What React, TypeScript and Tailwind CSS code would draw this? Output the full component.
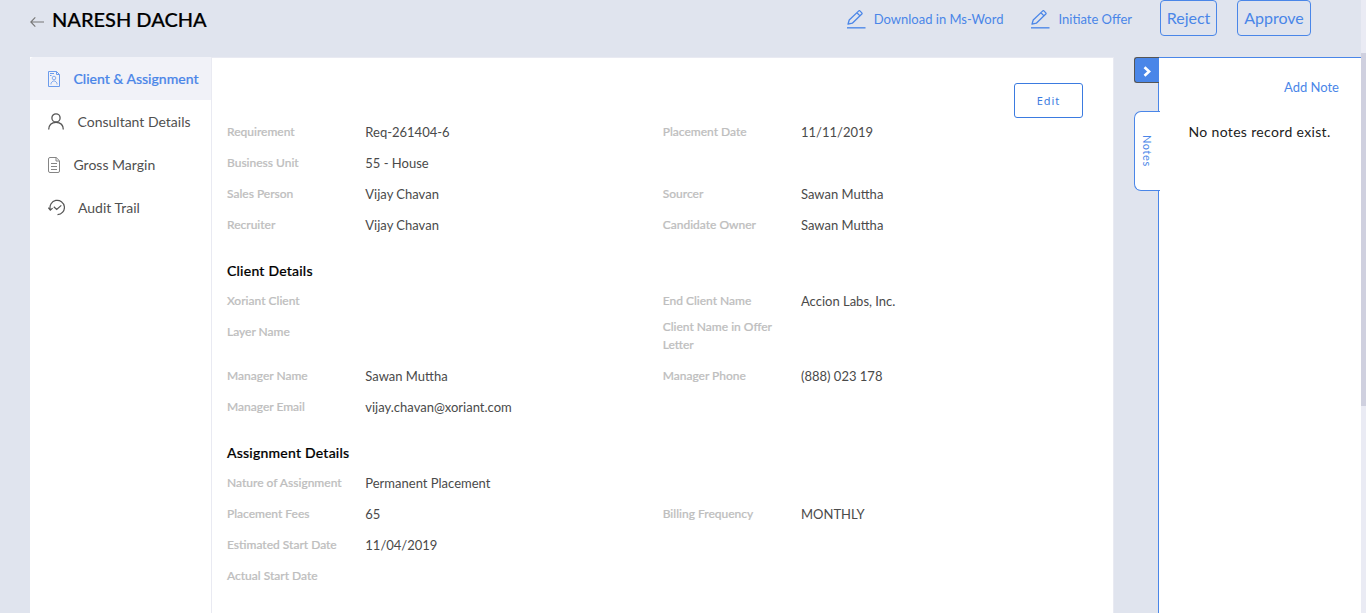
import React from "react";

type Pair = [label: string, value: string] | null;
type Row = { left: Pair; right?: Pair; tall?: boolean };

const general: Row[] = [
  { left: ["Requirement", "Req-261404-6"], right: ["Placement Date", "11/11/2019"] },
  { left: ["Business Unit", "55 - House"] },
  { left: ["Sales Person", "Vijay Chavan"], right: ["Sourcer", "Sawan Muttha"] },
  { left: ["Recruiter", "Vijay Chavan"], right: ["Candidate Owner", "Sawan Muttha"] },
];

const client: Row[] = [
  { left: ["Xoriant Client", ""], right: ["End Client Name", "Accion Labs, Inc."] },
  { left: ["Layer Name", ""], right: ["Client Name in Offer Letter", ""], tall: true },
  { left: ["Manager Name", "Sawan Muttha"], right: ["Manager Phone", "(888) 023 178"] },
  { left: ["Manager Email", "vijay.chavan@xoriant.com"] },
];

const assignment: Row[] = [
  { left: ["Nature of Assignment", "Permanent Placement"] },
  { left: ["Placement Fees", "65"], right: ["Billing Frequency", "MONTHLY"] },
  { left: ["Estimated Start Date", "11/04/2019"] },
  { left: ["Actual Start Date", ""] },
];

function Field({ pair, tall }: { pair?: Pair; tall?: boolean }) {
  if (!pair) return <div />;
  const wraps = tall && pair[0].length > 20;
  return (
    <div className="flex">
      <div className={`w-[138.3px] shrink-0 pr-5 text-[12px] font-medium leading-[18px] text-[#bebebe] [-webkit-text-stroke:0.2px_#bebebe] ${wraps ? "pt-px" : "pt-[6px]"}`}>
        {pair[0]}
      </div>
      <div className="whitespace-nowrap pt-[6px] text-[13px] leading-[18px] text-[#4a4a4a]">{pair[1]}</div>
    </div>
  );
}

function Rows({ rows }: { rows: Row[] }) {
  return (
    <div>
      {rows.map((r, i) => (
        <div key={i} className={`grid grid-cols-[435.7px_1fr] ${r.tall ? "h-[44px]" : "h-[31px]"}`}>
          <Field pair={r.left} tall={r.tall} />
          <Field pair={r.right} tall={r.tall} />
        </div>
      ))}
    </div>
  );
}

function Heading({ children }: { children: React.ReactNode }) {
  return <h2 className="h-[45px] pt-[20px] text-[14px] font-medium leading-5 tracking-[0.22px] text-black [-webkit-text-stroke:0.2px_#000]">{children}</h2>;
}

function PencilIcon() {
  return (
    <svg width="19" height="19" viewBox="0 0 19 19" fill="none" stroke="#4a86e8">
      <path d="M1 14.2 2.2 10 11.8.9a.8.8 0 0 1 1.1 0l1.9 2a.8.8 0 0 1 0 1.1L5.3 13.2 1 14.2ZM9.9 2.8l3.1 3.1" strokeWidth="1.3" strokeLinejoin="round" />
      <path d="M0 17.8h18.5" strokeWidth="1.6" opacity=".85" />
    </svg>
  );
}

function ResumeIcon() {
  return (
    <svg width="12" height="16" viewBox="0 0 12 16" fill="none" stroke="#6c9cec">
      <path d="M.5.5h8l3 3v12H.5V.5Zm8 0v3h3M2 2.500h4M2 4.500h1.500" />
      <circle cx="6" cy="7" r="1.8" strokeWidth=".8" />
      <path d="M3 13.500v-1.500l2-2h2l2 2v1.500" strokeWidth=".8" />
    </svg>
  );
}

function PersonIcon() {
  return (
    <svg width="16" height="17" viewBox="0 0 16 17" fill="none" stroke="#555" strokeWidth="1.3">
      <circle cx="8" cy="4.900" r="4.100" />
      <path d="M.7 16.500C.7 12 3.500 9.300 8 9.300s7.300 2.700 7.300 7.200" />
    </svg>
  );
}

function DocIcon() {
  return (
    <svg width="12" height="16" viewBox="0 0 12 16" fill="none" stroke="#858585">
      <path d="M2 .5h6.200l3.300 3.300V14a1.500 1.500 0 0 1-1.500 1.500H2A1.500 1.500 0 0 1 .5 14V2A1.500 1.500 0 0 1 2 .5Zm6 0V4h3.500M3 6.500h6M3 9.500h6M3 12.500h6" />
    </svg>
  );
}

function AuditIcon() {
  return (
    <svg width="17" height="17" viewBox="0 0 17 17" fill="none" stroke="#555" strokeWidth="1.2">
      <path d="M2.300 10.500A7.200 7.200 0 1 1 9.500 15.700M.3 8.700l2 2.500 2.300-2.100M5.800 7.700 8.700 10.500l4.600-4.100" />
    </svg>
  );
}

const nav = [
  { icon: <ResumeIcon />, text: "Client & Assignment", gap: "gap-[13.500px]", active: true },
  { icon: <PersonIcon />, text: "Consultant Details", gap: "gap-[13.500px]" },
  { icon: <DocIcon />, text: "Gross Margin", gap: "gap-[13.500px]" },
  { icon: <AuditIcon />, text: "Audit Trail", gap: "gap-[13px]" },
];

export default function App() {
  return (
    <div className="flex h-[613px] w-full overflow-hidden bg-[#e0e4ee] font-['Lato',sans-serif]">
      <div className="flex min-w-0 flex-1 flex-col">
        <header className="flex h-[57px] shrink-0 items-start pl-[30px]">
          <svg className="mt-[16px]" width="14" height="12" viewBox="0 0 14 12" fill="none" stroke="#777" strokeWidth="1.1">
            <path d="M14 6H.8M5.300 1.300.8 6l4.500 4.700" />
          </svg>
          <h1 className="ml-2 mt-[5px] whitespace-nowrap text-[20px] font-medium leading-7 text-black [-webkit-text-stroke:0.2px_#000]">NARESH DACHA</h1>
          <div className="ml-auto mr-[50px] flex">
            <a className="mr-[28px] mt-[10px] flex gap-[8px] whitespace-nowrap text-[13px] leading-[19px] text-[#4a86e8]">
              <PencilIcon />
              <span>Download in Ms-Word</span>
            </a>
            <a className="mr-[28px] mt-[10px] flex gap-[8px] whitespace-nowrap text-[13px] leading-[19px] text-[#4a86e8]">
              <PencilIcon />
              <span>Initiate Offer</span>
            </a>
            <button className="mr-5 h-9 w-[57px] rounded border border-[#4a86e8] text-[16px] text-[#4a86e8]">Reject</button>
            <button className="h-9 w-[74px] rounded border border-[#4a86e8] text-[16px] text-[#4a86e8]">Approve</button>
          </div>
        </header>

        <div className="flex min-h-0 flex-1 pl-[30px]">
          <nav className="w-[182px] shrink-0 border-r border-[#e9eaf2] bg-white">
            {nav.map((n) => (
              <div
                key={n.text}
                className={`flex h-[43px] items-center whitespace-nowrap pl-[18px] text-[14px] ${n.gap} ${
                  n.active ? "rounded-tl bg-[#f1f2f8] font-medium text-[#4a86e8] [-webkit-text-stroke:0.2px_#4a86e8]" : "text-[#505050]"
                }`}
              >
                {n.icon}
                <span className={n.active ? "" : "pb-px"}>{n.text}</span>
              </div>
            ))}
          </nav>

          <main className="w-[902px] shrink-0 border-r border-t border-[#e9eaf2] bg-white pl-[15px]">
            <div className="flex h-[59px] justify-end pr-[30px] pt-[25px]">
              <button className="h-[35px] w-[69px] rounded-[3px] border border-[#3b7be0] pt-0.5 font-['Noto_Sans',sans-serif] text-[11px] tracking-[1px] text-[#3b7be0]">
                Edit
              </button>
            </div>
            <Rows rows={general} />
            <Heading>Client Details</Heading>
            <Rows rows={client} />
            <Heading>Assignment Details</Heading>
            <Rows rows={assignment} />
          </main>

          <aside className="ml-[20px] flex min-w-0 flex-1">
            <div className="relative z-10 -mr-px w-[25px] shrink-0">
              <button className="flex h-[26px] w-[25px] items-center justify-center rounded-l-[3px] border border-r-0 border-[#555] bg-[#4a86e8] pt-[3px]">
                <svg width="9" height="11" viewBox="0 0 9 11" fill="none" stroke="#fff" strokeWidth="2.600">
                  <path d="m1.500 1.200 4.600 4.300-4.600 4.300" />
                </svg>
              </button>
              <div className="mt-[28px] flex h-[80px] w-[26px] items-center justify-center rounded-l-[7px] border border-r-0 border-[#4a86e8] bg-white pr-0.5">
                <span className="text-[11px] leading-4 tracking-[0.6px] text-[#4a86e8] [writing-mode:vertical-rl]">Notes</span>
              </div>
            </div>
            <div className="flex-1 border-l border-t border-[#4a86e8] bg-white">
              <div className="pr-[22px] pt-[19px] text-right text-[13px] leading-5 text-[#4a86e8]">Add Note</div>
              <p className="whitespace-nowrap pl-[29.500px] pt-[25px] text-[14px] leading-5 tracking-[0.34px] text-[#212121]">No notes record exist.</p>
            </div>
          </aside>
        </div>
      </div>
      <div className="w-[5px] shrink-0 bg-[#eaebf4]">
        <div className="mt-[53px] h-[353px] bg-[#cfd0df]" />
      </div>
    </div>
  );
}
